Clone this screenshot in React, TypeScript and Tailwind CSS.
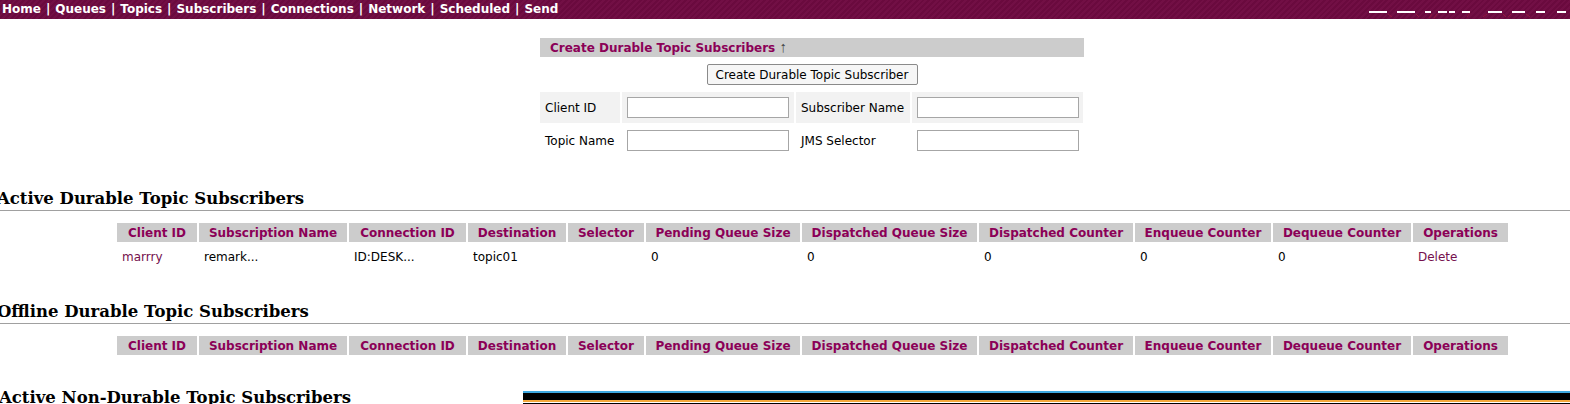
const columns = [
  { title: "Client ID", width: "w-[80px]" },
  { title: "Subscription Name", width: "w-[148px]" },
  { title: "Connection ID", width: "w-[117px]" },
  { title: "Destination", width: "w-[98px]" },
  { title: "Selector", width: "w-[76px]" },
  { title: "Pending Queue Size", width: "w-[154px]" },
  { title: "Dispatched Queue Size", width: "w-[175px]" },
  { title: "Dispatched Counter", width: "w-[154px]" },
  { title: "Enqueue Counter", width: "w-[136px]" },
  { title: "Dequeue Counter", width: "w-[138px]" },
  { title: "Operations", width: "w-[95px]" },
];

const row = ["marrry", "remark...", "ID:DESK...", "topic01", "", "0", "0", "0", "0", "0", "Delete"];

function SubscriberTable({ rows }: { rows: string[][] }) {
  return (
    <table className="ml-[115px] w-[1395px] table-fixed border-separate border-spacing-[2px]">
      <thead>
        <tr>
          {columns.map((c) => (
            <th key={c.title} className={`${c.width} h-[19px] bg-[#cccccc] p-0 pt-px text-center text-[12px] font-bold leading-[18px] text-[#8b0057]`}>
              {c.title}
            </th>
          ))}
        </tr>
      </thead>
      <tbody>
        {rows.map((r, i) => (
          <tr key={i}>
            {r.map((cell, j) => (
              <td key={j} className={`h-[26px] px-[5px] py-0 text-[12px] ${j === 0 || j === 10 ? "text-[#750f4d]" : "text-black"}`}>
                {cell}
              </td>
            ))}
          </tr>
        ))}
      </tbody>
    </table>
  );
}

function Field({ label, labelWidth, inputWidth, shaded }: { label: string; labelWidth: string; inputWidth: string; shaded?: boolean }) {
  return (
    <>
      <td className={`${labelWidth} px-[5px] py-0 text-[12px] text-black ${shaded ? "bg-[#f2f2f2]" : ""}`}>{label}</td>
      <td className={`${inputWidth} px-[5px] py-0 ${shaded ? "bg-[#f2f2f2]" : ""}`}>
        <input className="block h-[21px] w-[162px] border border-[#a6a6a6] bg-white" />
      </td>
    </>
  );
}

function Heading({ children }: { children: string }) {
  return (
    <h2 className="whitespace-nowrap font-['DejaVu_Serif',serif] text-[16.5px] font-bold leading-[22px] text-black">
      {children}
    </h2>
  );
}

export default function App() {
  return (
    <div className="h-[404px] w-[1570px] overflow-hidden bg-white font-['DejaVu_Sans',sans-serif]">
      <div className="relative h-[19px] overflow-hidden bg-[repeating-linear-gradient(135deg,#6a0a3e_0px,#6a0a3e_2px,#720f45_2px,#720f45_4px)]">
        <div className="pl-[2px] text-[12px] font-bold leading-[18px] text-white [word-spacing:0.8px]">
          Home | Queues | Topics | Subscribers | Connections | Network | Scheduled | Send
        </div>
        {/* logo cut off by the bar, only its top edge shows */}
        <svg className="absolute left-[1369px] top-[11px]" width="198" height="8">
          <g fill="#ffffff">
            <rect x="0" width="18" height="2" />
            <rect x="28" width="18" height="2" />
            <rect x="56" width="6" height="2" />
            <rect x="69" width="9" height="2" />
            <rect x="80" width="6" height="2" />
            <rect x="93" width="8" height="2" />
            <rect x="119" width="14" height="2" />
            <rect x="143" width="13" height="2" />
            <rect x="167" width="9" height="2" />
            <rect x="188" width="9" height="2" />
          </g>
          <path d="M19 3l4 3M47 3l3 3M63 3l-3 4M68 3l-3 4M101 2l-3 4M118 3l-4 3M134 3l3 3M142 3l-3 3M157 3l4 3" stroke="#96153f" strokeWidth="1" fill="none" />
        </svg>
      </div>

      <div className="ml-[540px] mt-[19px] w-[544px]">
        <div className="h-[19px] bg-[#cccccc] pl-[10px] pt-px text-[12px] font-bold leading-[18px] text-[#8b0057]">
          Create Durable Topic Subscribers <span className="font-['Liberation_Sans',sans-serif] text-[15px] font-normal leading-[15px] text-[#444444]">↑</span>
        </div>
        <div className="mt-[7px] flex justify-center">
          <button className="h-[21px] w-[211px] rounded-[2px] border border-[#8a8a8a] bg-[#f6f6f6] text-[12px] text-black">
            Create Durable Topic Subscriber
          </button>
        </div>
        <table className="-ml-[2px] mt-[5px] w-[547px] table-fixed border-separate border-spacing-[2px]">
          <tbody>
            <tr className="h-[31px]">
              <Field label="Client ID" labelWidth="w-[80px]" inputWidth="w-[172px]" shaded />
              <Field label="Subscriber Name" labelWidth="w-[114px]" inputWidth="w-[171px]" shaded />
            </tr>
            <tr className="h-[31px]">
              <Field label="Topic Name" labelWidth="w-[80px]" inputWidth="w-[172px]" />
              <Field label="JMS Selector" labelWidth="w-[114px]" inputWidth="w-[171px]" />
            </tr>
          </tbody>
        </table>
      </div>

      <div className="-ml-[3px] mt-[30px]">
        <Heading>Active Durable Topic Subscribers</Heading>
      </div>
      <div className="h-px bg-[#a0a0a0]" />
      <div className="mt-[10px]">
        <SubscriberTable rows={[row]} />
      </div>

      <div className="-ml-[3px] mt-[29px]">
        <Heading>Offline Durable Topic Subscribers</Heading>
      </div>
      <div className="h-px bg-[#a0a0a0]" />
      <div className="mt-[10px]">
        <SubscriberTable rows={[]} />
      </div>

      <div className="mt-[30px] flex items-start">
        <div className="-ml-[1px] w-[524px]">
          <Heading>Active Non-Durable Topic Subscribers</Heading>
        </div>
        <div className="mt-[4px] flex-1">
          <div className="h-[2px] bg-[#3fa9e0]" />
          <div className="h-[7px] bg-black" />
          <div className="h-[2px] bg-[#f5a83c]" />
          <div className="h-px bg-white" />
          <div className="h-px bg-black" />
        </div>
      </div>
    </div>
  );
}
